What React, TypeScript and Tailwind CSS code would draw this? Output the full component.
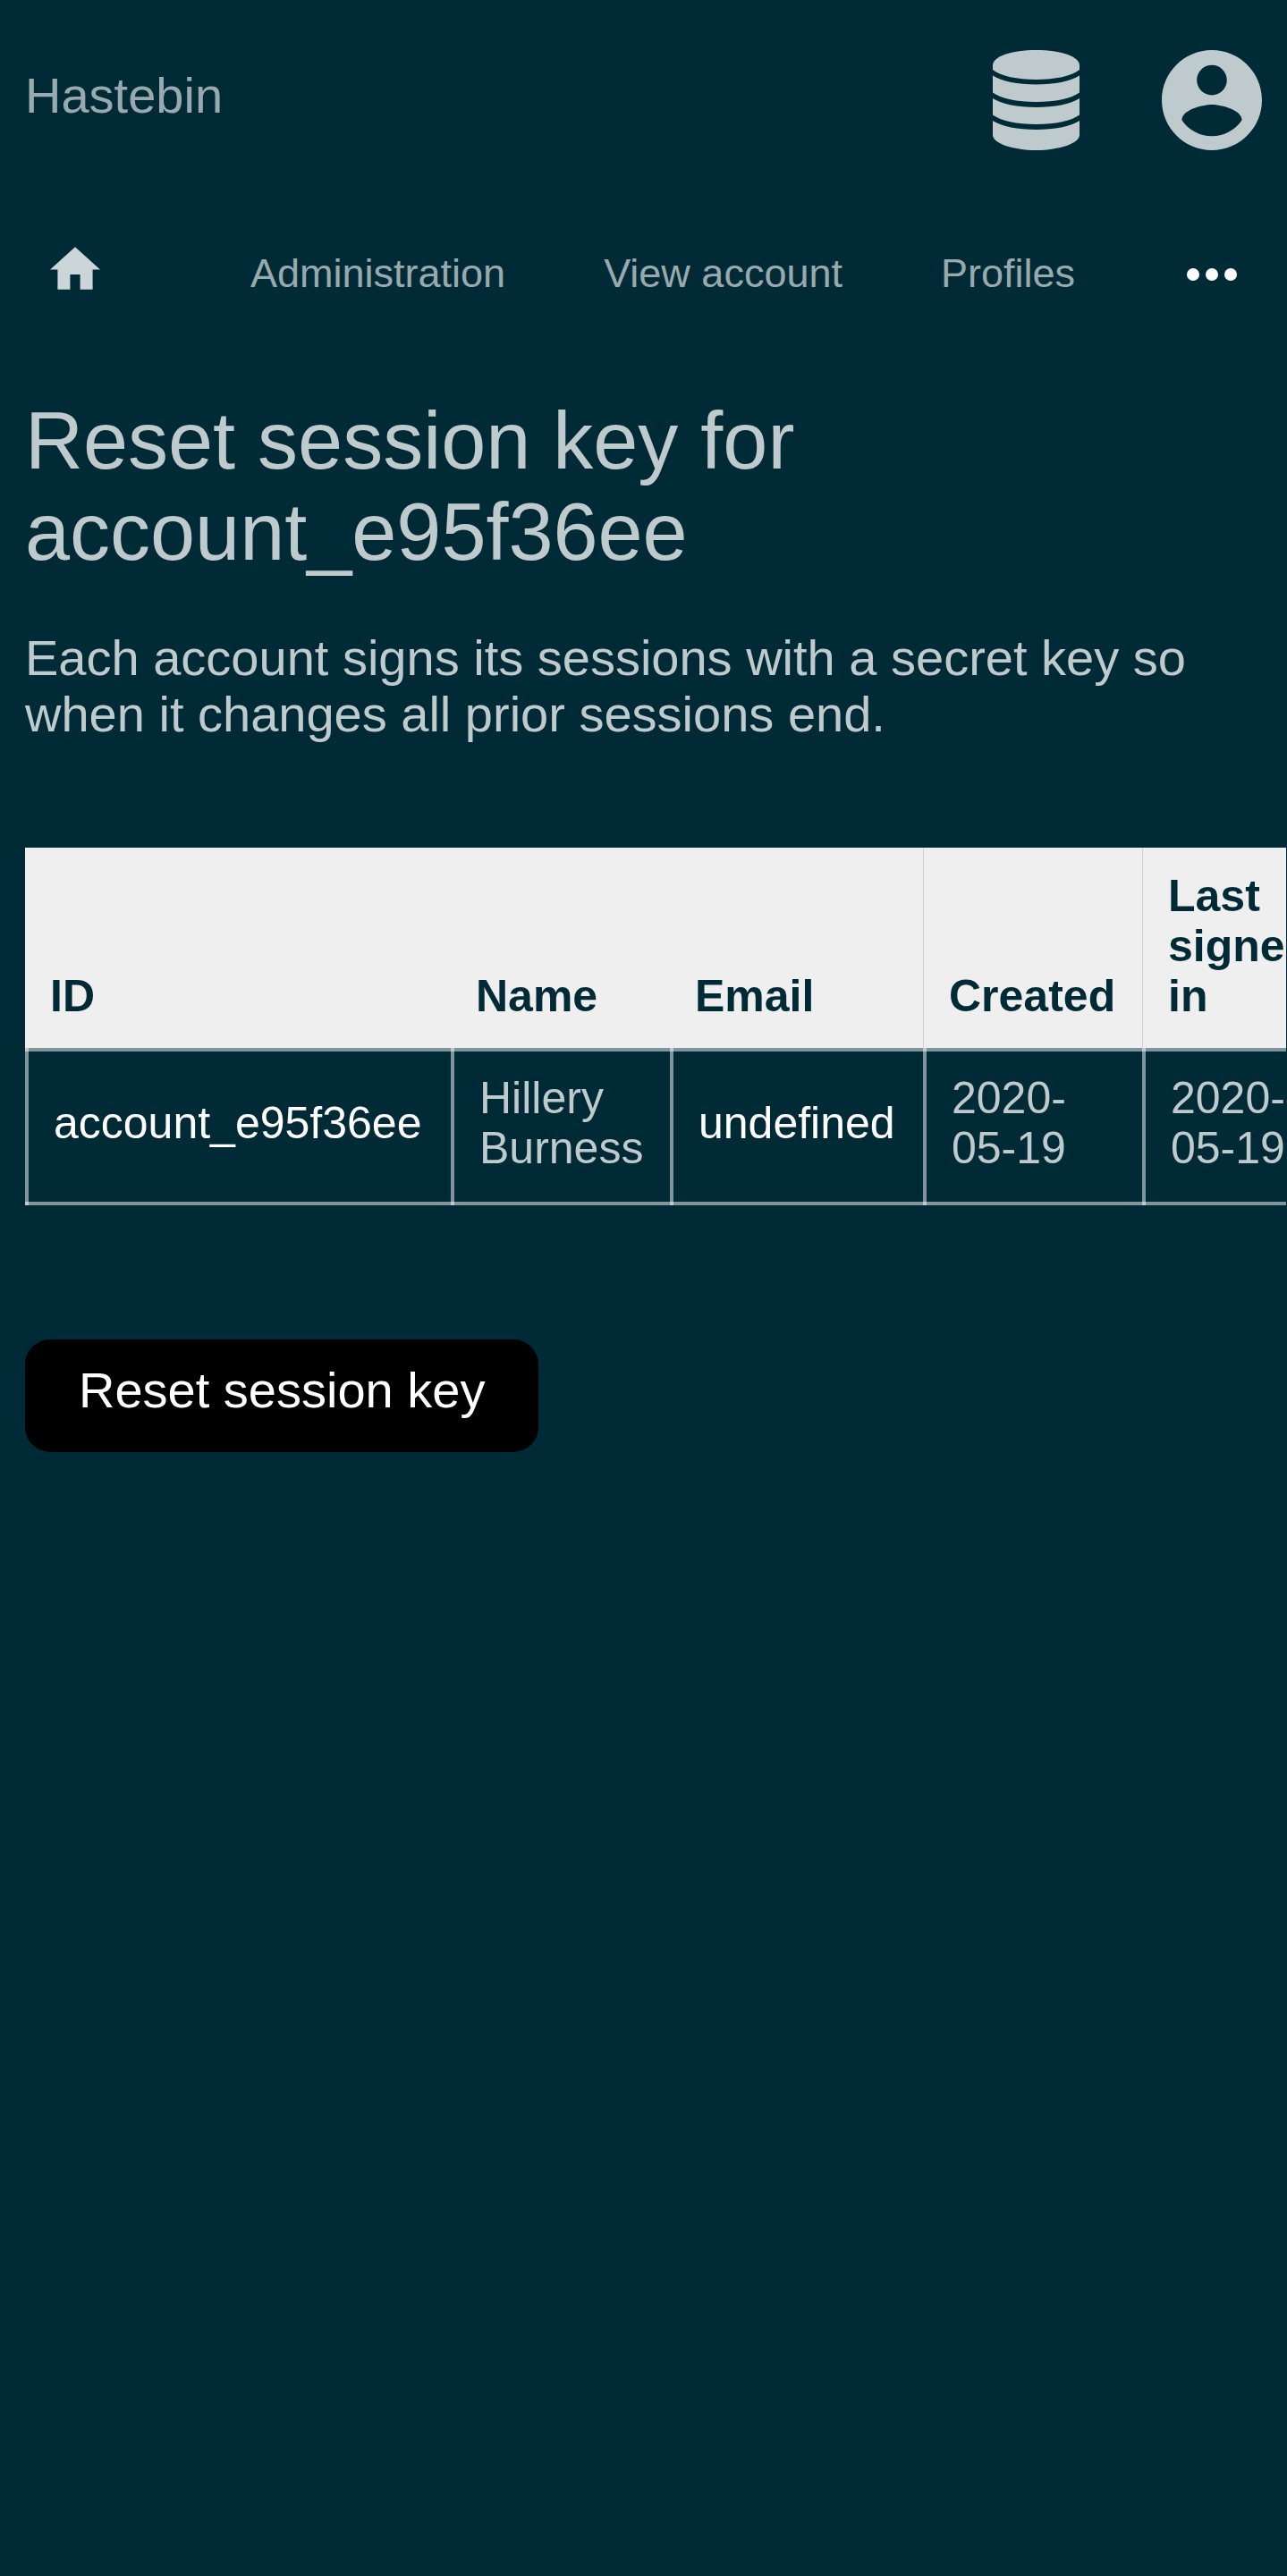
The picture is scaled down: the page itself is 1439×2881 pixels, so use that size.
const columns = [
  { label: 'ID', width: 'w-[476px]', rule: false },
  { label: 'Name', width: 'w-[245px]', rule: false },
  { label: 'Email', width: 'w-[283px]', rule: false },
  { label: 'Created', width: 'w-[245px]', rule: true },
  { label: 'Last signed in', width: 'w-[245px]', rule: true },
];

const navLinks = ['Administration', 'View account', 'Profiles'];

function DatabaseIcon() {
  return (
    <svg viewBox="0 0 97 112" className="h-28 w-[97px] fill-current" aria-hidden="true">
      <path d="M0 17C0 7 21 0 48.5 0S97 7 97 17V22C88 29 70 33 48.5 33S9 29 0 22Z" />
      <path d="M0 28.5C10 35 28 38.5 48.5 38.5S87 35 97 28.5V47.5C88 54 70 58 48.5 58S9 54 0 47.5Z" />
      <path d="M0 54C10 60.5 28 64 48.5 64S87 60.5 97 54V72.5C88 79 70 83 48.5 83S9 79 0 72.5Z" />
      <path d="M0 79C10 85.5 28 89 48.5 89S87 85.5 97 79V95C97 104 75 112 48.5 112S0 104 0 95Z" />
    </svg>
  );
}

function AccountIcon() {
  return (
    <svg viewBox="2 2 20 20" className="size-28 fill-current" aria-hidden="true">
      <path d="M12 2C6.48 2 2 6.48 2 12s4.48 10 10 10 10-4.48 10-10S17.52 2 12 2zm0 3c1.66 0 3 1.34 3 3s-1.34 3-3 3-3-1.34-3-3 1.34-3 3-3zm0 14.2c-2.5 0-4.71-1.28-6-3.22.03-1.99 4-3.08 6-3.08 1.99 0 5.97 1.09 6 3.08-1.29 1.94-3.5 3.22-6 3.22z" />
    </svg>
  );
}

function HomeIcon() {
  return (
    <svg viewBox="2 3 20 17" className="h-12 w-14 fill-current" aria-hidden="true">
      <path d="M10 20v-6h4v6h5v-8h3L12 3 2 12h3v8z" />
    </svg>
  );
}

function MoreIcon() {
  return (
    <svg viewBox="0 0 56 14" className="h-[14px] w-14 fill-current" aria-hidden="true">
      <circle cx="7" cy="7" r="7" />
      <circle cx="28" cy="7" r="7" />
      <circle cx="49" cy="7" r="7" />
    </svg>
  );
}

const cell =
  'relative border-y-4 border-white/50 pt-6 pr-6 pb-8 pl-8 align-middle before:absolute before:-top-1 before:-bottom-1 before:left-0 before:w-1 before:bg-white/50';

export default function App() {
  return (
    <div className="min-h-screen overflow-hidden bg-[#002b36] font-['Liberation_Sans',Arial,sans-serif] text-[56px] leading-[63px] text-[#bfcacd]">
      <header className="flex items-start justify-between px-7 pt-14">
        <a href="#" className="pt-[19px] text-[#99aaaf]">Hastebin</a>
        <div className="flex gap-[92px]">
          <button type="button" aria-label="Administrator menu"><DatabaseIcon /></button>
          <button type="button" aria-label="Account menu"><AccountIcon /></button>
        </div>
      </header>

      <nav className="mt-[108px] flex items-start px-14 text-[45px] leading-[52px] text-[#99aaaf]">
        <a href="#" aria-label="Home" className="mr-[168px] text-[#ccd5d7]"><HomeIcon /></a>
        <div className="flex gap-[110px] pt-1">
          {navLinks.map((label) => (
            <a key={label} href="#" className="whitespace-nowrap">{label}</a>
          ))}
        </div>
        <button type="button" aria-label="More" className="ml-auto pt-6 text-white"><MoreIcon /></button>
      </nav>

      <main className="px-7 pt-[110px]">
        <h1 className="max-w-[1000px] text-[90px] leading-[102px]">Reset session key for account_e95f36ee</h1>
        <p className="mt-[58px]">
          Each account signs its sessions with a secret key so when it changes all prior sessions end.
        </p>

        <div className="mt-[118px] -mr-[27px] overflow-hidden">
          <table className="w-[1494px] table-fixed border-separate border-spacing-0 text-left text-[50px] leading-[56px]">
            <thead className="bg-[#efefef] text-[#002b36]">
              <tr>
                {columns.map((column) => (
                  <th
                    key={column.label}
                    scope="col"
                    className={`${column.width} ${column.rule ? 'border-l border-[#cfd3d4]' : ''} pt-[26px] pr-6 pb-[30px] pl-7 align-bottom font-bold`}
                  >
                    {column.label}
                  </th>
                ))}
              </tr>
            </thead>
            <tbody>
              <tr>
                <td className={cell}><a href="#" className="text-white">account_e95f36ee</a></td>
                <td className={cell}>Hillery Burness</td>
                <td className={cell}><a href="#" className="text-white">undefined</a></td>
                <td className={cell}>2020-<wbr />05-19</td>
                <td className={cell}>2020-<wbr />05-19</td>
              </tr>
            </tbody>
          </table>
        </div>

        <form className="mt-[150px]" onSubmit={(event) => event.preventDefault()}>
          <button type="submit" className="rounded-[28px] bg-black px-[60px] pt-[25px] pb-[38px] text-white">
            Reset session key
          </button>
        </form>
      </main>
    </div>
  );
}
